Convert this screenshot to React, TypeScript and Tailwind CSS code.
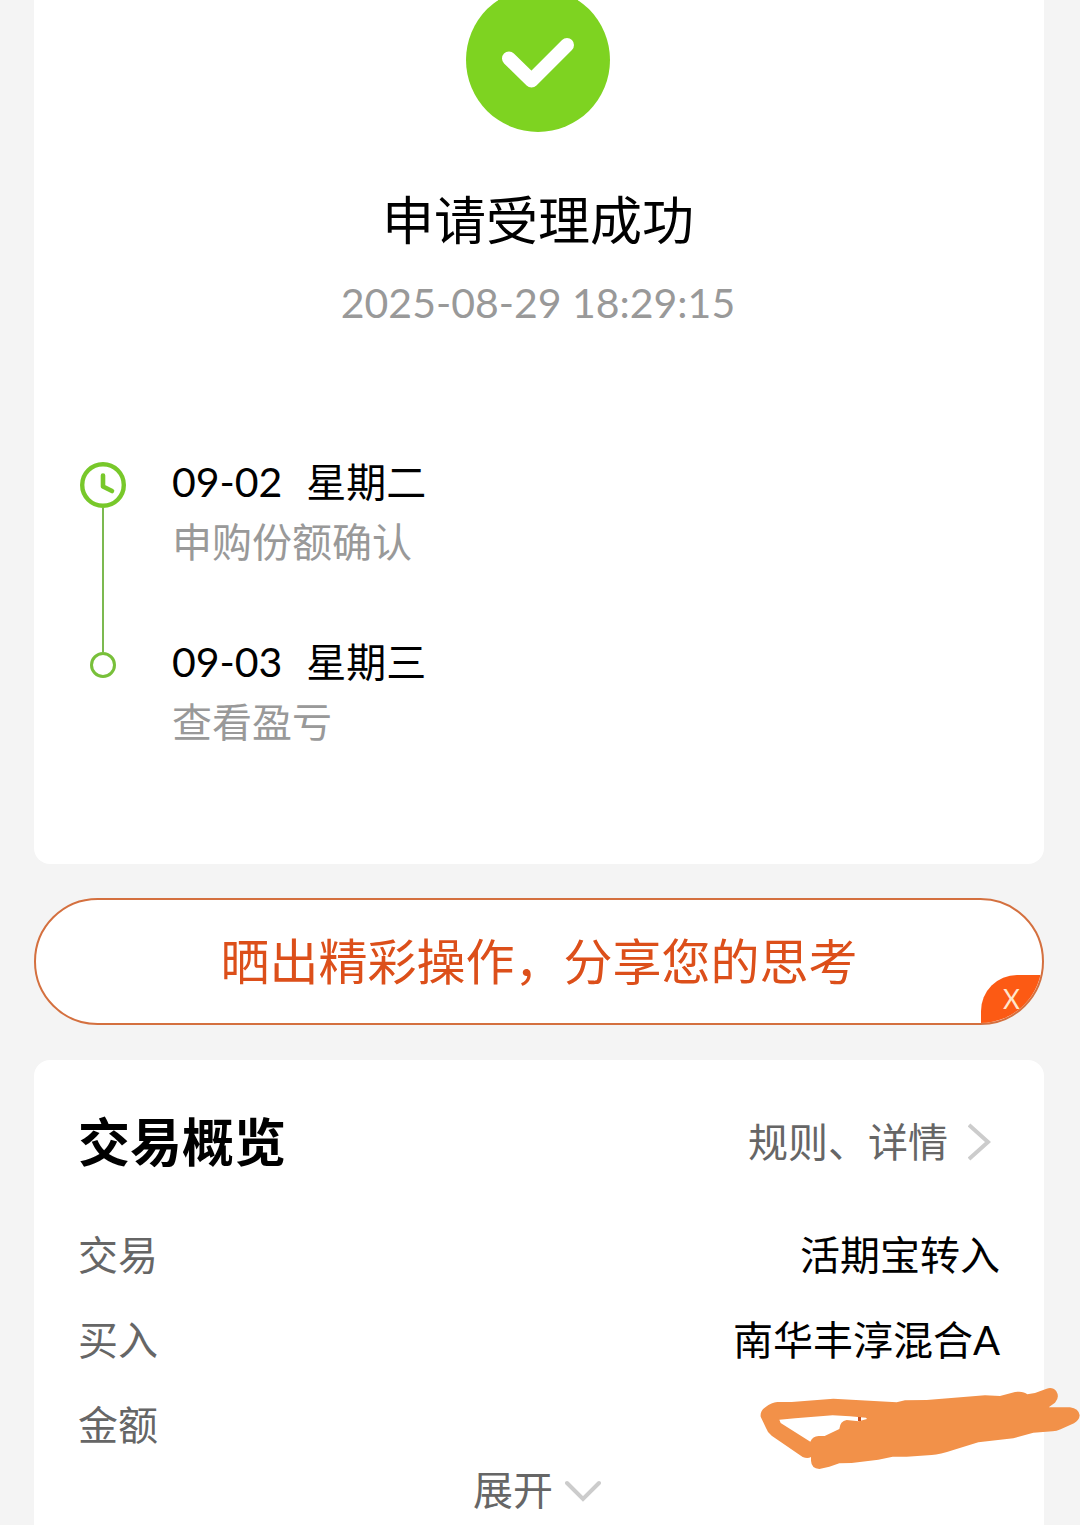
import type { ReactNode } from "react";

interface IStep {
  date: string;
  weekday: string;
  label: string;
}

const steps: IStep[] = [
  { date: "09-02", weekday: "星期二", label: "申购份额确认" },
  { date: "09-03", weekday: "星期三", label: "查看盈亏" },
];

function SuccessIcon() {
  return (
    <svg
      viewBox="0 12 144 132"
      className="w-36 h-[132px]"
      role="img"
      aria-label="成功"
    >
      <circle cx="72" cy="72" r="72" fill="#7ed321" />
      <path
        d="M43 70.5 L65.5 92.5 L101 57"
        fill="none"
        stroke="#fff"
        strokeWidth="14"
        strokeLinecap="round"
        strokeLinejoin="round"
      />
    </svg>
  );
}

function ClockIcon() {
  return (
    <svg viewBox="0 0 46 46" className="w-[46px] h-[46px]" aria-hidden="true">
      <circle
        cx="23"
        cy="23"
        r="20.8"
        fill="none"
        stroke="#78c82a"
        strokeWidth="4.4"
      />
      <path
        d="M23 13.5 V24.5 L32 29"
        fill="none"
        stroke="#78c82a"
        strokeWidth="4.6"
        strokeLinecap="round"
        strokeLinejoin="round"
      />
    </svg>
  );
}

function Scribble() {
  return (
    <svg
      viewBox="60 51 960 252"
      className="absolute top-[5px] -right-20 w-80 h-[84px]"
      aria-hidden="true"
    >
      <path
        fill="#f29149"
        fillRule="evenodd"
        d="M62 140 Q60 122 76 112 Q95 97 112 96 L155 96 L280 86 L470 97 L495 91 L560 90 L735 76 L780 78 L825 66 Q850 62 862 73 L885 69 L920 56 Q938 50 949 64 Q960 82 945 98 L926 112 L990 112 Q1016 115 1019 136 Q1018 150 1002 160 L962 178 Q950 184 938 184 L880 188 L820 205 L715 217 L640 240 Q600 253 575 255 L500 260 L458 260 L415 269 L335 279 L298 280 L268 290 L238 297 Q214 295 213 272 L213 261 Q203 267 188 261 L95 197 Q82 187 78 174 Z
          M118 149 L122 159 L211 215 Q218 199 236 198 L254 198 L298 177 Q300 153 320 150 L356 154 L381 147 L378 143 L330 139 L278 136 L165 145 Z"
      />
      <rect x="354" y="141" width="9" height="12" fill="#c9501f" />
    </svg>
  );
}

function Row({ label, children }: { label: string; children?: ReactNode }) {
  return (
    <div className="relative flex items-center justify-between h-[85px]">
      <dt className="text-[#666]">{label}</dt>
      <dd className="text-black">{children}</dd>
    </div>
  );
}

export default function App() {
  return (
    <main className="min-h-screen overflow-hidden bg-[#f4f4f4] pl-[34px] pr-9 text-[40px] font-['Lato','Noto_Sans_CJK_SC',sans-serif]">
      <section className="flex flex-col items-center rounded-b-2xl bg-white pr-0.5 pb-28">
        <SuccessIcon />
        <h1 className="mt-14 text-[52px] leading-[64px] text-black">
          申请受理成功
        </h1>
        <time className="mt-[26px] text-[41px] leading-[50px] text-[#999]">
          2025-08-29 18:29:15
        </time>

        <ol className="mt-31 w-full px-[46px]">
          {steps.map((step, i) => (
            <li key={step.date} className="flex gap-[46px]">
              <div className="flex w-[46px] flex-col items-center">
                {i === 0 ? (
                  <>
                    <div className="h-[10px]" />
                    <ClockIcon />
                    <div className="w-0.5 flex-1 bg-[#7cb950]" />
                  </>
                ) : (
                  <>
                    <div className="h-5 w-0.5 bg-[#7cb950]" />
                    <div className="h-[26px] w-[26px] rounded-full border-3 border-[#78c03a]" />
                  </>
                )}
              </div>
              <div className={i === 0 ? "pb-15" : ""}>
                <p className="flex gap-6 leading-[60px] text-black">
                  <span className="text-[41px]">{step.date}</span>
                  <span>{step.weekday}</span>
                </p>
                <p className="leading-[60px] text-[#999]">{step.label}</p>
              </div>
            </li>
          ))}
        </ol>
      </section>

      <div className="relative mt-[34px] overflow-hidden rounded-full border-2 border-[#d4703f] bg-white">
        <a
          href="#share"
          className="block text-center text-[49px] leading-[123px] text-[#dc4f1a]"
        >
          晒出精彩操作，分享您的思考
        </a>
        <button
          type="button"
          aria-label="关闭"
          className="absolute right-0 bottom-0 h-12 w-[61px] rounded-tl-[36px] bg-[#fc5a14] text-[26px] leading-[48px] text-[#ffe6cc]"
        >
          X
        </button>
      </div>

      <section className="mt-[35px] rounded-t-2xl bg-white px-11 pt-13 pb-3">
        <div className="flex items-center justify-between leading-[60px]">
          <h2 className="text-[52px] font-bold text-black">交易概览</h2>
          <a href="#detail" className="mr-2 flex items-center gap-5 text-[#666]">
            规则、详情
            <svg viewBox="0 0 24 40" className="h-10 w-6" aria-hidden="true">
              <path
                d="M1 3 L20 20 L1 37"
                fill="none"
                stroke="#ccc"
                strokeWidth="4"
              />
            </svg>
          </a>
        </div>

        <dl className="mt-10">
          <Row label="交易">活期宝转入</Row>
          <Row label="买入">南华丰淳混合A</Row>
          <Row label="金额">
            <Scribble />
          </Row>
        </dl>

        <div className="flex justify-center pr-1">
          <button
            type="button"
            className="flex items-center gap-3 leading-[46px] text-[#666]"
          >
            展开
            <svg viewBox="0 0 36 24" className="h-6 w-9" aria-hidden="true">
              <path
                d="M2 5 L18 21 L34 5"
                fill="none"
                stroke="#ccc"
                strokeWidth="4"
                strokeLinecap="round"
              />
            </svg>
          </button>
        </div>
      </section>
    </main>
  );
}
